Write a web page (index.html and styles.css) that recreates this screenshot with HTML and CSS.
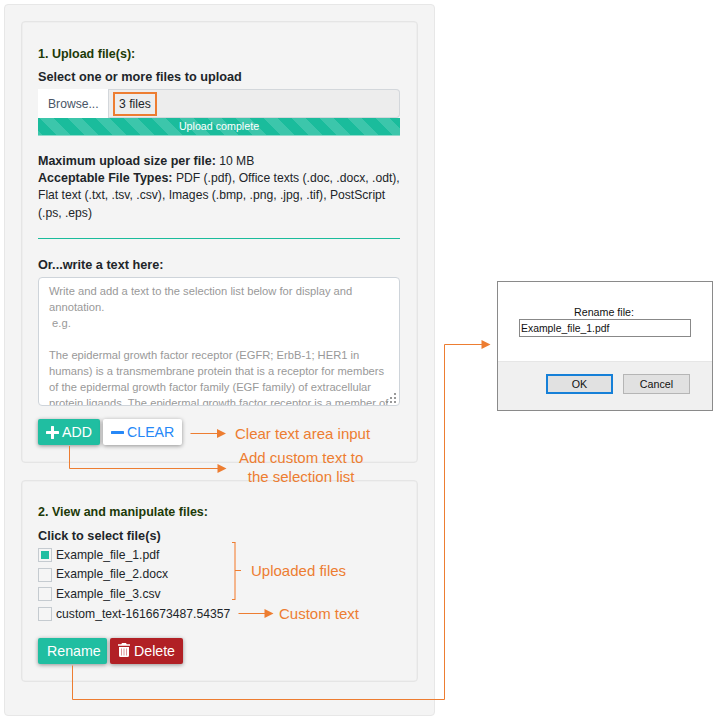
FILE: index.html
```html
<!DOCTYPE html>
<html lang="en">
<head>
<meta charset="utf-8">
<title>Upload files</title>
<link rel="stylesheet" href="styles.css">
</head>
<body>
<main class="panel">
  <section class="card upload">
    <h2 class="title">1. Upload file(s):</h2>
    <div class="label">Select one or more files to upload</div>
    <div class="file-input"><span class="browse">Browse...</span><span class="file-name"><span class="highlight">3 files</span></span></div>
    <div class="progress">Upload complete</div>
    <p class="info"><b>Maximum upload size per file:</b> 10 MB<br><b>Acceptable File Types:</b> <span class="types">PDF (.pdf), Office texts (.doc, .docx, .odt),</span><br>Flat text (.txt, .tsv, .csv), Images (.bmp, .png, .jpg, .tif), PostScript<br>(.ps, .eps)</p>
    <div class="rule"></div>
    <div class="label write">Or...write a text here:</div>
    <div class="textarea">Write and add a text to the selection list below for display and
annotation.
 e.g.

The epidermal growth factor receptor (EGFR; ErbB-1; HER1 in
humans) is a transmembrane protein that is a receptor for members
of the epidermal growth factor family (EGF family) of extracellular
protein ligands. The epidermal growth factor receptor is a member of<svg class="grip" viewBox="0 0 10 10"><path d="M8 0h2v2H8zM4 4h2v2H4zM8 4h2v2H8zM0 8h2v2H0zM4 8h2v2H4zM8 8h2v2H8z"/></svg></div>
    <div class="buttons">
      <span class="btn green add"><svg class="plus" viewBox="0 0 12 12"><path d="M6 1v10M1 6h10"/></svg>ADD</span>
      <span class="btn white clear"><svg class="minus" viewBox="0 0 12 12"><path d="M1 6h10"/></svg>CLEAR</span>
    </div>
  </section>
  <section class="card manage">
    <h2 class="title">2. View and manipulate files:</h2>
    <div class="label click">Click to select file(s)</div>
    <ul class="files">
      <li><i class="box checked"></i><span>Example_file_1.pdf</span></li>
      <li><i class="box"></i><span>Example_file_2.docx</span></li>
      <li><i class="box"></i><span>Example_file_3.csv</span></li>
      <li><i class="box"></i><span>custom_text-1616673487.54357</span></li>
    </ul>
    <div class="buttons lower">
      <span class="btn green rename">Rename</span>
      <span class="btn red delete"><svg class="trash" viewBox="0 0 12 14"><path fill="#fff" d="M4 0h4l.7 1.2H12v1.6H0V1.2h3.3zM1 4h10v8.5q0 1.5-1.5 1.5h-7Q1 14 1 12.500z"/><path stroke="#d98a8d" stroke-width=".9" d="M3.500 5.500v7M6 5.500v7M8.500 5.500v7"/></svg>Delete</span>
    </div>
  </section>
</main>
<aside class="dialog">
  <div class="dialog-body">
    <div class="dialog-label">Rename file:</div>
    <div class="dialog-input">Example_file_1.pdf</div>
  </div>
  <div class="dialog-actions"><span class="dbtn ok">OK</span><span class="dbtn">Cancel</span></div>
</aside>
<svg class="arrows" viewBox="0 0 717 722">
  <path class="line" d="M190.500 433.500H218M69.500 446V468.500H218M238.500 613.500H266M72.500 665.500V699.500H444.500V344.500H482"/>
  <path class="head" d="M217 429l9 4.500-9 4.500zM217.500 464l9 4.500-9 4.500zM264.500 609l9 4.500-9 4.500zM481.500 340l9 4.500-9 4.500z"/>
  <path class="brace" d="M235 542.500V599"/>
  <path class="line thin" d="M232 542.500h3.500M232 599.500h3.500M235 570.500h6"/>
</svg>
<div class="note n-clear">Clear text area input</div>
<div class="note n-add">Add custom text to<br>the selection list</div>
<div class="note n-up">Uploaded files</div>
<div class="note n-custom">Custom text</div>
</body>
</html>
```
FILE: styles.css
```css
* { box-sizing: border-box; }
body {
  margin: 0;
  width: 717px;
  height: 722px;
  position: relative;
  overflow: hidden;
  display: flex;
  align-items: flex-start;
  background: #fff;
  color: #212529;
  font: 12.150px/17.2px "Liberation Sans", Arial, sans-serif;
}
.panel {
  margin: 4px 0 0 4px;
  width: 431px;
  height: 712px;
  padding: 16px;
  border: 1.500px solid #e7e7e7;
  border-radius: 4px;
  background: #f4f4f4;
  flex: none;
}
.card {
  width: 397px;
  padding: 0 17px 0 16px;
  border: 1px solid #e5e5e5;
  border-radius: 4px;
  box-shadow: inset 0 0 0 .5px #e9e9e9;
}
.upload { height: 442px; padding-top: 23px; }
.manage { height: 202px; margin-top: 17px; padding-top: 22px; }
.title {
  margin: 0;
  font-size: 12.500px;
  line-height: 18px;
  color: #1c3a08;
}
.label { margin-top: 5px; line-height: 18px; font-size: 12.700px; font-weight: bold; }
.file-input {
  display: flex;
  margin-top: 3px;
  height: 29px;
  border: 1px solid #d3d7db;
  border-left: 0;
  border-radius: 0 4px 4px 0;
  background: #ededed;
}
.browse {
  width: 71px;
  margin: -1px 0;
  padding-left: 10px;
  line-height: 30px;
  background: #fff;
  border-right: 1px solid #d3d7db;
  color: #495566;
}
.file-name { padding: 2px 0 0 4px; }
.highlight {
  display: block;
  width: 44px;
  height: 24px;
  border: 2px solid #ed7d31;
  line-height: 20px;
  padding-left: 4px;
}
.progress {
  height: 18px;
  border-bottom: 1px solid #8fdccb;
  color: #fff;
  font-size: 10.700px;
  line-height: 17px;
  text-align: center;
  background: linear-gradient(45deg, rgba(255,255,255,.15) 25%, transparent 25%, transparent 50%, rgba(255,255,255,.15) 50%, rgba(255,255,255,.15) 75%, transparent 75%) 2px 0 / 28px 28px #1abc9c;
}
.info { height: 69px; margin: 17px 0 0; white-space: nowrap; }
.info b { font-size: 12.500px; line-height: 1; }
.rule { margin-top: 16px; border-top: 1px solid #1abc9c; }
.write { margin-top: 17px; }
.textarea {
  position: relative;
  height: 129px;
  margin-top: 3px;
  padding: 5px 10px 0;
  overflow: hidden;
  border: 1px solid #ced4da;
  border-radius: 4px;
  background: #fff;
  color: #999;
  font-size: 11.200px;
  line-height: 16px;
  white-space: pre;
}
.grip { position: absolute; right: 3px; bottom: 2px; width: 10px; height: 10px; fill: #999; }
.buttons { display: flex; gap: 3px; margin-top: 13px; }
.btn {
  display: flex;
  align-items: center;
  height: 26px;
  padding: 1px 0 0 9px;
  border-radius: 2px;
  font-size: 14.200px;
  box-shadow: 0 1px 4px rgba(0,0,0,.4);
}
.green { background: #20bea1; color: #fff; }
.white { background: #fff; color: #2688f7; }
.red { background: #b12025; color: #fff; }
.add { width: 62px; padding-left: 8px; }
.clear { width: 79px; padding-left: 8px; }
.plus, .minus { width: 13px; height: 13px; margin: -1px 3px 0 0; fill: none; stroke: currentColor; stroke-width: 2.8; stroke-linecap: round; }
.click { margin-top: 6px; }
.files { list-style: none; margin: 0; padding: 0; }
.files li { display: flex; align-items: center; height: 19.700px; }
.files span { padding-top: 1px; }
.box { width: 14px; height: 14px; margin-right: 4px; border: 1px solid #c5cbd0; background: #f5f5f5; }
.checked { background: #20bea1; box-shadow: inset 0 0 0 2px #f5f5f5; }
.lower { margin-top: 14px; }
.rename { width: 69px; }
.delete { width: 73px; padding-left: 8px; }
.trash { width: 12px; height: 14px; margin: -2px 4px 0 0; fill: none; }
.dialog {
  margin: 281px 0 0 62px;
  width: 216px;
  height: 130px;
  border: 1px solid #8a8a8a;
  background: #f0f0f0;
  color: #111;
  font-size: 10.700px;
  flex: none;
}
.dialog-body { height: 80px; padding: 21px 21px 0; background: #fff; border-bottom: 1px solid #e6e6e6; }
.dialog-label { height: 16px; line-height: 18px; text-align: center; padding-right: 2px; }
.dialog-input { width: 172px; height: 18px; border: 1px solid #888; padding-left: 1px; font-size: 10.400px; line-height: 17px; }
.dialog-actions { display: flex; gap: 10px; padding: 12px 0 0 48px; }
.dbtn { width: 67px; height: 20px; border: 1px solid #b5b5b5; background: #e1e1e1; text-align: center; line-height: 19px; }
.ok { border: 2px solid #1680d8; line-height: 17px; }
.arrows { position: absolute; left: 0; top: 0; width: 717px; height: 722px; }
.line { fill: none; stroke: #ed7d31; stroke-width: 1; }
.head { fill: #ed7d31; }
.brace { fill: none; stroke: #f4b58c; stroke-width: 2; }
.note { position: absolute; color: #ed7d31; font-size: 15px; line-height: 19px; white-space: nowrap; text-align: center; }
.n-clear { left: 235px; top: 424px; }
.n-add { left: 239px; top: 448px; }
.n-up { left: 251px; top: 561px; }
.n-custom { left: 279px; top: 604px; }
```
